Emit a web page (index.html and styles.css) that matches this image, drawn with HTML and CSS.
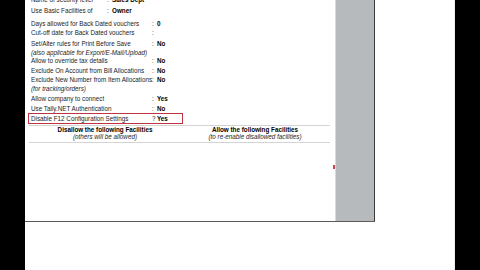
FILE: index.html
```html
<!DOCTYPE html>
<html lang="en">
<head>
    <meta charset="UTF-8">
    <title>Security Levels</title>
    <link rel="stylesheet" href="styles.css">
</head>
<body>
<div class="screen">
    <div class="window">
        <div class="panel">
            <div class="content">
                <div class="row first"><span class="lbl short">Name of security level</span><span class="sep short">:</span><b class="val">Sales Dept</b></div>
                <div class="row g1"><span class="lbl short">Use Basic Facilities of</span><span class="sep short">:</span><b class="val">Owner</b></div>

                <div class="row g2"><span class="lbl">Days allowed for Back Dated vouchers</span><span class="sep">:</span><b class="val">0</b></div>
                <div class="row tight"><span class="lbl">Cut-off date for Back Dated vouchers</span><span class="sep">:</span><b class="val"></b></div>

                <div class="row g3"><span class="lbl">Set/Alter rules for Print Before Save</span><span class="sep">:</span><b class="val">No</b></div>
                <div class="note">(also applicable for <i>Export/E-Mail/Upload</i>)</div>
                <div class="row"><span class="lbl">Allow to override tax details</span><span class="sep">:</span><b class="val">No</b></div>
                <div class="row"><span class="lbl">Exclude On Account from Bill Allocations</span><span class="sep">:</span><b class="val">No</b></div>
                <div class="row"><span class="lbl">Exclude New Number from Item Allocations</span><span class="sep">:</span><b class="val">No</b></div>
                <div class="note">(for tracking/orders)</div>
                <div class="row g4"><span class="lbl">Allow company to connect</span><span class="sep">:</span><b class="val">Yes</b></div>
                <div class="row g5"><span class="lbl">Use Tally.NET Authentication</span><span class="sep">:</span><b class="val">No</b></div>

                <div class="row boxed"><span class="lbl">Disable F12 Configuration Settings</span><span class="sep">?</span><b class="val">Yes</b></div>

                <div class="rule top"></div>
                <div class="heads">
                    <div class="col">
                        <div class="head">Disallow the following Facilities</div>
                        <div class="sub">(others will be allowed)</div>
                    </div>
                    <div class="col">
                        <div class="head">Allow the following Facilities</div>
                        <div class="sub">(to re-enable disallowed facilities)</div>
                    </div>
                </div>
                <div class="rule"></div>
            </div>
            <div class="rail"></div>
            <span class="tick"></span>
        </div>
    </div>
</div>
</body>
</html>
```

FILE: styles.css
```css
/* Page frame */
html, body {
    margin: 0;
    padding: 0;
    background: #000;
    overflow: hidden;
}
.screen {
    display: flex;
    height: 270px;
    padding-left: 25px;
}
.window {
    width: 429px;
    height: 270px;
    background: #fff;
    border-right: 1px solid #ececec;
}

/* Report panel */
.panel {
    position: relative;
    display: flex;
    width: 350px;
    height: 221px;
    border-bottom: 1px solid #5a5a5a;
    overflow: hidden;
}
.content {
    width: 310px;
    font-family: "Liberation Sans", Arial, sans-serif;
    font-size: 6.3px;
    color: #1c1c1c;
}
.rail {
    width: 40px;
    background: #b6babd;
    border-left: 1px solid #d8dadc;
    border-right: 1px solid #3a3a3a;
    box-sizing: border-box;
}
.tick {
    position: absolute;
    left: 308px;
    top: 165px;
    width: 2px;
    height: 4px;
    background: #c8444f;
}

/* Rows */
.row {
    display: flex;
    line-height: 9.4px;
    height: 9.4px;
    padding-left: 6px;
    white-space: nowrap;
}
.lbl {
    width: 120px;
}
.lbl.short {
    width: 75px;
}
.sep {
    width: 5px;
    padding-left: 1px;
}
.val {
    font-weight: bold;
    color: #000;
}
.note {
    line-height: 7.8px;
    height: 7.8px;
    padding-left: 6px;
    font-style: italic;
}
.first { margin-top: -4.7px; }
.g1 { margin-top: 1.6px; }
.g2 { margin-top: 3.3px; }
.tight { margin-top: -0.8px; }
.g3 { margin-top: 2.3px; }
.g4 { margin-top: 1.1px; }
.g5 { margin-top: 0.6px; }

.boxed {
    width: 151px;
    height: 10px;
    margin-top: 0;
    margin-left: 3px;
    padding-left: 2px;
    border: 1px solid #c03340;
    box-sizing: border-box;
    height: 11px;
    line-height: 9px;
    width: 155px;
}

/* Facility headings */
.rule {
    height: 1px;
    margin: 1.5px 5px 0 4px;
    background: #d4d4d4;
}
.heads {
    display: grid;
    grid-template-columns: 1fr 1fr;
    margin: 0 5px;
    text-align: center;
}
.head {
    font-weight: bold;
    color: #000;
    line-height: 7px;
}
.sub {
    font-style: italic;
    line-height: 7.2px;
}
```
